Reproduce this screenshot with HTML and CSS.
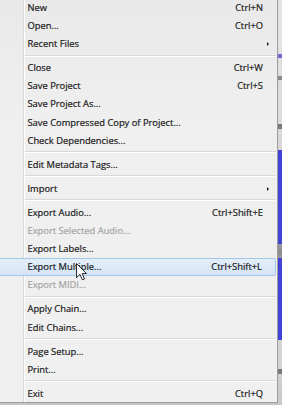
FILE: index.html
```html
<!DOCTYPE html>
<html>
<head>
<meta charset="utf-8">
<link rel="stylesheet" href="styles.css">
</head>
<body>
<div class="screen">
  <div class="menu">
    <div class="item"><span class="label">New</span><span class="key">Ctrl+N</span></div>
    <div class="item"><span class="label">Open...</span><span class="key">Ctrl+O</span></div>
    <div class="item"><span class="label">Recent Files</span><span class="arrow"></span></div>
    <div class="sep"></div>
    <div class="item"><span class="label">Close</span><span class="key">Ctrl+W</span></div>
    <div class="item"><span class="label">Save Project</span><span class="key">Ctrl+S</span></div>
    <div class="item"><span class="label">Save Project As...</span></div>
    <div class="item"><span class="label">Save Compressed Copy of Project...</span></div>
    <div class="item"><span class="label">Check Dependencies...</span></div>
    <div class="sep"></div>
    <div class="item"><span class="label">Edit Metadata Tags...</span></div>
    <div class="sep"></div>
    <div class="item"><span class="label">Import</span><span class="arrow"></span></div>
    <div class="sep"></div>
    <div class="item"><span class="label">Export Audio...</span><span class="key">Ctrl+Shift+E</span></div>
    <div class="item disabled"><span class="label">Export Selected Audio...</span></div>
    <div class="item"><span class="label">Export Labels...</span></div>
    <div class="item hl"><span class="label">Export Multiple...</span><span class="key">Ctrl+Shift+L</span></div>
    <div class="item disabled"><span class="label">Export MIDI...</span></div>
    <div class="sep"></div>
    <div class="item"><span class="label">Apply Chain...</span></div>
    <div class="item"><span class="label">Edit Chains...</span></div>
    <div class="sep"></div>
    <div class="item"><span class="label">Page Setup...</span></div>
    <div class="item"><span class="label">Print...</span></div>
    <div class="sep"></div>
    <div class="item"><span class="label">Exit</span><span class="key">Ctrl+Q</span></div>
    <svg class="pointer" viewBox="0 0 12 19" width="11" height="17.5">
      <path d="M0.5 0.5 L0.5 16 L4.3 12.3 L7 18.3 L9.3 17.3 L6.7 11.5 L11.5 11.5 Z" fill="#fff" stroke="#111" stroke-width="1" stroke-linejoin="miter"/>
    </svg>
  </div>
  <div class="strip"></div>
</div>
</body>
</html>
```
FILE: styles.css
```css
html, body {
  margin: 0;
  padding: 0;
}
body {
  width: 282px;
  height: 405px;
  overflow: hidden;
  background: #cdcdcd;
}
.screen {
  display: flex;
  width: 282px;
  height: 405px;
  overflow: hidden;
  background: linear-gradient(to bottom, #d6d6d6, #c4c4c4);
}
.menu {
  position: relative;
  width: 277px;
  flex: none;
  align-self: flex-start;
  margin-top: -1.55px;
  border-right: 1px solid #9e9e9e;
  border-bottom: 1px solid #9e9e9e;
  background:
    linear-gradient(to right, transparent 23px, #d9d9d9 23px, #d9d9d9 24px, #ffffff 24px, #ffffff 25px, transparent 25px),
    linear-gradient(to bottom, #e9e9e9, #efefef 30%, #f0f0f0);
  font-family: "Open Sans", "Noto Sans", sans-serif;
  font-size: 9.35px;
  color: #1a1a1a;
  -webkit-text-stroke: 0.2px currentColor;
}
.item {
  display: flex;
  align-items: center;
  box-sizing: border-box;
  height: 18.1px;
  padding-left: 27.5px;
  padding-right: 7px;
  white-space: nowrap;
}
.label {
  flex: 1;
}
.key {
  margin-right: 7px;
}
.arrow {
  width: 0;
  height: 0;
  border-top: 2px solid transparent;
  border-bottom: 2px solid transparent;
  border-left: 2.5px solid #1a1a1a;
  margin-right: 1.5px;
  margin-top: 1px;
}
.disabled {
  color: #a4a4a4;
}
.hl {
  margin-left: -2px;
  margin-right: 1px;
  padding-left: 28.5px;
  padding-right: 6px;
  border: 1px solid #a4c8e8;
  border-radius: 2px;
  background: linear-gradient(to bottom, #e4eefa, #d4e5f6);
}
.sep {
  height: 6px;
  box-sizing: border-box;
  padding: 2px 1px 0 25px;
}
.sep::after {
  content: "";
  display: block;
  height: 1px;
  background: #d8d8d8;
  box-shadow: 0 1px 0 #ffffff;
}
.pointer {
  position: absolute;
  left: 75.5px;
  top: 264.5px;
  display: block;
}
.strip {
  flex: 1;
  background: linear-gradient(to bottom,
    #e2e2e2 0, #e2e2e2 54px, #6a6ad8 54px, #6a6ad8 58px, #e0e0e0 58px,
    #e0e0e0 76px, #8a8a8a 76px, #8a8a8a 80px, #dcdcdc 80px,
    #dcdcdc 124px, #7a7a7a 124px, #7a7a7a 129px, #d8d8d8 129px,
    #d8d8d8 150px, #4444d4 150px, #4444d4 244px, #9a9aa8 244px,
    #8a8a8a 252px, #9a9aa8 258px, #4444d4 258px, #4444d4 340px,
    #d4d4d4 340px, #d4d4d4 369px, #7a7a7a 369px, #7a7a7a 374px,
    #d0d0d0 374px, #c8c8c8 405px);
}
```
